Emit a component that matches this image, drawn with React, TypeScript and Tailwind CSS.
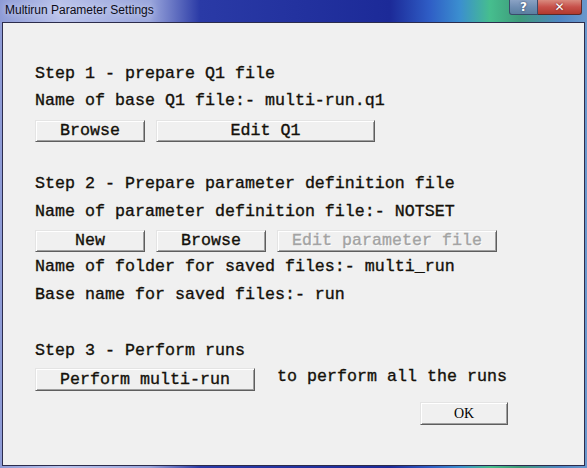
import React from "react";

const MONO = "font-['Liberation_Mono','Courier_New',monospace] text-[16.67px] leading-[20px] text-[#14100a]";

const BTN =
  "flex items-center justify-center bg-[#f0f0f0] border border-t-[#e4e4e4] border-l-[#e4e4e4] border-b-[#5e5e5e] border-r-[#5e5e5e] shadow-[inset_1px_1px_#ffffff,inset_-1px_-1px_#a0a0a0]";

function Button({ label, w, h = 22, disabled = false }: { label: string; w: number; h?: number; disabled?: boolean }) {
  return (
    <div className={BTN} style={{ width: w, height: h }}>
      <span
        className={
          MONO +
          " [-webkit-text-stroke:0.35px_currentColor] " +
          (disabled ? "!text-[#a3a3a3] [text-shadow:1px_1px_0_#ffffff]" : "")
        }
      >
        {label}
      </span>
    </div>
  );
}

function Line({ children, className = "" }: { children: React.ReactNode; className?: string }) {
  return (
    <div className={`${MONO} [-webkit-text-stroke:0.35px_currentColor] h-[20px] whitespace-pre ${className}`}>
      {children}
    </div>
  );
}

export default function App() {
  return (
    <div className="w-[587px] h-[468px] overflow-hidden flex flex-col bg-[linear-gradient(90deg,#8e9bd6_0px,#b9c2ea_60px,#9aa6dc_150px,#2a3aa6_200px,#1c2a98_390px,#2f5ec6_430px,#3b8fcf_460px,#46be8e_490px,#3e9a7a_520px,#4f86c4_560px,#6a98cc_587px)]">
      {/* Title bar */}
      <div className="h-[22px] flex items-start justify-between">
        <div className="pl-[5px] pt-[3px] font-['Liberation_Sans',Arial,sans-serif] text-[12px] leading-[14px] text-[#0c0c18] [text-shadow:0_0_6px_#dfe4fa]">
          Multirun Parameter Settings
        </div>
        <div className="flex mr-[5px]">
          <div className="w-[29px] h-[15px] flex items-center justify-center rounded-bl-[3px] border border-t-0 border-[#3a4a6a] bg-[linear-gradient(180deg,#8aa2c4,#6f8db2_50%,#5a7fa0)]">
            <span className="font-['DejaVu_Sans',sans-serif] font-bold text-[12px] leading-[12px] text-white [text-shadow:0_0_2px_#203050]">?</span>
          </div>
          <div className="w-[44px] h-[15px] flex items-center justify-center rounded-br-[3px] border border-t-0 border-l-0 border-[#5a2a2a] bg-[linear-gradient(180deg,#d98a7e,#c7504a_50%,#b23a2e)]">
            <span className="font-['DejaVu_Sans',sans-serif] font-bold text-[12px] leading-[12px] text-white [text-shadow:0_0_2px_#501010]">✕</span>
          </div>
        </div>
      </div>

      {/* Client area */}
      <div className="mx-[2px] h-[444px] border border-[#2c2c4c] bg-[#f0f0f0] pl-[32px] flex flex-col">
        <Line className="mt-[41px]">Step 1 - prepare Q1 file</Line>
        <Line className="mt-[7px]">Name of base Q1 file:- multi-run.q1</Line>
        <div className="mt-[9px] flex gap-[11px]">
          <Button label="Browse" w={110} />
          <Button label="Edit Q1" w={219} />
        </div>

        <Line className="mt-[32px]">Step 2 - Prepare parameter definition file</Line>
        <Line className="mt-[8px]">Name of parameter definition file:- NOTSET</Line>
        <div className="mt-[8px] flex gap-[11px]">
          <Button label="New" w={110} />
          <Button label="Browse" w={110} />
          <Button label="Edit parameter file" w={220} disabled />
        </div>
        <Line className="mt-[5px]">Name of folder for saved files:- multi_run</Line>
        <Line className="mt-[8px]">Base name for saved files:- run</Line>

        <Line className="mt-[36px]">Step 3 - Perform runs</Line>
        <div className="mt-[7px] flex items-start gap-[22px]">
          <Button label="Perform multi-run" w={220} h={23} />
          <Line className="-mt-px">to perform all the runs</Line>
        </div>

        <div className="mt-[11px] ml-[385px]">
          <div className={BTN + " w-[88px] h-[23px]"}>
            <span className="font-['Liberation_Serif','Times_New_Roman',serif] text-[14px] leading-[14px] text-black">OK</span>
          </div>
        </div>
      </div>
    </div>
  );
}
